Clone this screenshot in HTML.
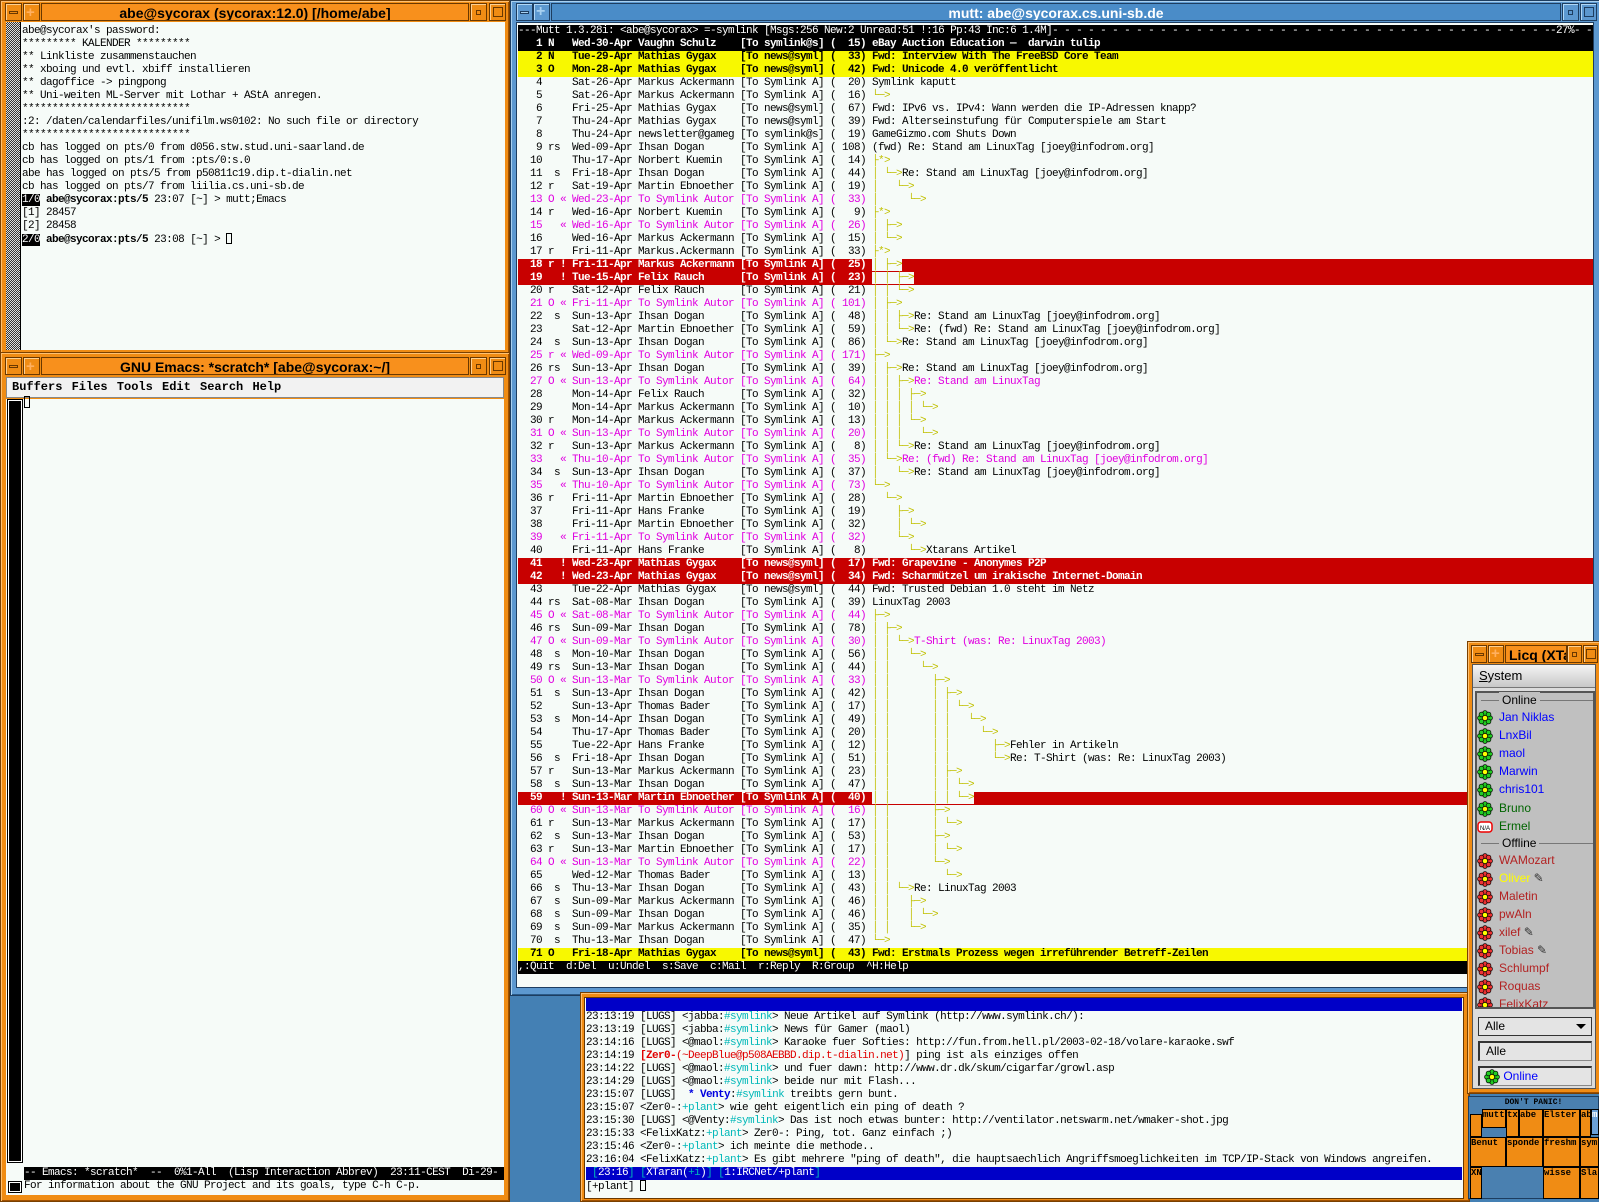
<!DOCTYPE html>
<html><head><meta charset="utf-8">
<style>
*{box-sizing:border-box}
body{margin:0;width:1599px;height:1199px;background:#4480b4;position:relative;overflow:hidden;font-family:"Liberation Sans",sans-serif}
.a{position:absolute}
.mono{font:11px/13px "Liberation Mono","DejaVu Sans Mono",monospace;letter-spacing:-0.6px;white-space:pre}
.ow{position:absolute;background:#f08c14;border:1px solid #7a4000;box-shadow:inset 1px 1px 0 #ffc070,inset -1px -1px 0 #a05000}
.bw{position:absolute;background:#5c98d0;border:1px solid #1d3d60;box-shadow:inset 1px 1px 0 #a8d0f0,inset -1px -1px 0 #2a5a88}
.tt{position:absolute;top:3px;height:18px;font:bold 14px/18px "Liberation Sans",sans-serif;text-align:center;border:1px solid #6a3800;white-space:nowrap;overflow:hidden}
.btn{position:absolute;top:3px;width:17px;height:18px;border:1px solid #6a3800;box-shadow:inset 1px 1px 0 #ffd090}
.bb{border-color:#1d3d60;box-shadow:inset 1px 1px 0 #b0d8f8}
.bg{background:#f6fbf8}
#m{white-space:normal}
#m .r{position:relative;height:13px;white-space:pre}
#m i{position:absolute;font-style:normal;top:0}
.n{left:0;width:24px;text-align:right}.f{left:30px}.d{left:54px}.an{left:120px}.t{left:222px}.l{left:312px}.s{left:354px}
.y{color:#c0c000;font-weight:normal}
.k{background:#000;color:#fff;font-weight:bold}
.ye{background:#f8f800;color:#000;font-weight:bold}
.rd{background:#c80000;color:#fff;font-weight:bold}
.mg{color:#e000e0}
.w{background:#f6fbf8}
.cy{color:#00b8b8}
.lq{position:absolute;left:1477px;height:18px;font:12px/18px "Liberation Sans",sans-serif;white-space:nowrap}
.lq svg{vertical-align:middle;margin-right:6px}
.pc{position:absolute;background:#f08c14;border:1px solid #000;font:bold 9px/10px "Liberation Mono",monospace;overflow:hidden;white-space:nowrap;color:#000}
</style></head><body>
<svg width="0" height="0" style="position:absolute">
<defs>
<g id="fl"><g stroke="#000" stroke-width="0.7">
<circle cx="8" cy="3" r="2.4"/><circle cx="8" cy="13" r="2.4"/><circle cx="3" cy="8" r="2.4"/><circle cx="13" cy="8" r="2.4"/>
<circle cx="4.5" cy="4.5" r="2.4"/><circle cx="11.5" cy="11.5" r="2.4"/><circle cx="4.5" cy="11.5" r="2.4"/><circle cx="11.5" cy="4.5" r="2.4"/></g>
<circle cx="8" cy="8" r="2.6" fill="#ff0" stroke="#000" stroke-width="0.6"/></g>
</defs></svg>

<!-- top-left terminal -->
<div class="ow" style="left:0;top:0;width:510px;height:354px"></div>
<div class="btn" style="left:5px;background:#f08c14"><div class="a" style="left:3px;top:7px;width:9px;height:3px;border:1px solid #6a3800"></div></div>
<div class="btn" style="left:23px;background:#f08c14"><div class="a" style="left:2px;top:2px;font:bold 15px/13px sans-serif;color:#ffb060">+</div></div>
<div class="tt" style="left:41px;width:428px;background:#f8901c">abe@sycorax (sycorax:12.0) [/home/abe]</div>
<div class="btn" style="left:470px;background:#f08c14"><div class="a" style="left:5px;top:6px;width:5px;height:5px;border:1px solid #6a3800"></div></div>
<div class="btn" style="left:489px;background:#f08c14"><div class="a" style="left:3px;top:3px;width:10px;height:10px;border:1px solid #6a3800"></div></div>
<div class="a" style="left:6px;top:22px;width:14px;height:328px;background:repeating-conic-gradient(#333 0 25%,#ddd 0 50%) 0 0/2px 2px"></div>
<div class="a bg" style="left:20px;top:22px;width:485px;height:328px;border-left:1px solid #000"></div>
<div class="a mono" style="left:22px;top:25px;color:#000">abe@sycorax's password:
********* KALENDER *********
** Linkliste zusammenstauchen
** xboing und evtl. xbiff installieren
** dagoffice -> pingpong
** Uni-weiten ML-Server mit Lothar + AStA anregen.
****************************
:2: /daten/calendarfiles/unifilm.ws0102: No such file or directory
****************************
cb has logged on pts/0 from d056.stw.stud.uni-saarland.de
cb has logged on pts/1 from :pts/0:s.0
abe has logged on pts/5 from p50811c19.dip.t-dialin.net
cb has logged on pts/7 from liilia.cs.uni-sb.de
<span style="background:#000;color:#fff">1/0</span> <b>abe@sycorax:pts/5</b> 23:07 [~] > mutt;Emacs
[1] 28457
[2] 28458
<span style="background:#000;color:#fff">2/0</span> <b>abe@sycorax:pts/5</b> 23:08 [~] > <span style="display:inline-block;width:6px;height:11px;border:1px solid #000;vertical-align:-2px"></span></div>

<!-- emacs -->
<div class="ow" style="left:0;top:352px;width:510px;height:850px"></div>
<div class="btn" style="left:5px;top:357px;background:#f08c14"><div class="a" style="left:3px;top:7px;width:9px;height:3px;border:1px solid #6a3800"></div></div>
<div class="btn" style="left:23px;top:357px;background:#f08c14"><div class="a" style="left:2px;top:2px;font:bold 15px/13px sans-serif;color:#ffb060">+</div></div>
<div class="tt" style="left:41px;top:357px;width:428px;background:#f8901c">GNU Emacs: *scratch* [abe@sycorax:~/]</div>
<div class="btn" style="left:470px;top:357px;background:#f08c14"><div class="a" style="left:5px;top:6px;width:5px;height:5px;border:1px solid #6a3800"></div></div>
<div class="btn" style="left:489px;top:357px;background:#f08c14"><div class="a" style="left:3px;top:3px;width:10px;height:10px;border:1px solid #6a3800"></div></div>
<div class="a" style="left:6px;top:377px;width:498px;height:21px;background:#f2f2f2;border:1px solid #888;font:bold 12px/19px 'Liberation Mono',monospace;padding-left:5px;word-spacing:2px">Buffers Files Tools Edit Search Help</div>
<div class="a bg" style="left:6px;top:399px;width:498px;height:796px"></div>
<div class="a" style="left:8px;top:400px;width:14px;height:762px;background:#000;border:1px solid #fff;outline:1px solid #000"></div>
<div class="a" style="left:24px;top:396px;width:6px;height:12px;border:1px solid #000"></div>
<div class="a mono" style="left:24px;top:1167px;width:480px;height:13px;background:#000;color:#fff">-- Emacs: *scratch*  --  0%1-All  (Lisp Interaction Abbrev)  23:11-CEST  Di-29-</div>
<div class="a" style="left:9px;top:1182px;width:12px;height:10px;background:#000;border:1px solid #fff;outline:1px solid #000"></div>
<div class="a mono" style="left:24px;top:1180px">For information about the GNU Project and its goals, type C-h C-p.</div>

<!-- mutt -->
<div class="bw" style="left:510px;top:0;width:1092px;height:996px"></div>
<div class="btn bb" style="left:516px;background:#5c98d0"><div class="a" style="left:3px;top:7px;width:9px;height:3px;border:1px solid #1d3d60;background:#a8d0f0"></div></div>
<div class="btn bb" style="left:533px;background:#5c98d0"><div class="a" style="left:2px;top:0px;font:bold 16px/15px sans-serif;color:#a8d0f0">+</div></div>
<div class="tt" style="left:551px;width:1010px;background:#4a8cc8;color:#fff;border-color:#1d3d60">mutt: abe@sycorax.cs.uni-sb.de</div>
<div class="btn bb" style="left:1562px;background:#5c98d0"><div class="a" style="left:5px;top:6px;width:5px;height:5px;border:1px solid #1d3d60"></div></div>
<div class="btn bb" style="left:1580px;background:#5c98d0"><div class="a" style="left:3px;top:3px;width:10px;height:10px;border:1px solid #1d3d60"></div></div>
<div class="a bg" style="left:516px;top:22px;width:1078px;height:966px;border:1px solid #1d3d60"></div>
<div id="m" class="a mono" style="left:518px;top:25px;width:1075px;color:#000;overflow:hidden">
<div class="r k" style="font-weight:normal;overflow:hidden">---Mutt 1.3.28i: &lt;abe@sycorax&gt; =-symlink [Msgs:256 New:2 Unread:51 !:16 Pp:43 Inc:6 1.4M]- - - - - - - - - - - - - - - - - - - - - - - - - - - - - - - - - - - - - - - - - - - - - - - - - - - - - - - - - - - - - - - - - - - - - - - - - - - - - - - - -<i style="left:1032px;background:#000">-27%- -</i></div>
<div class="r k"><i class="n">1</i><i class="f">N</i><i class="d">Wed-30-Apr</i><i class="an">Vaughn Schulz</i><i class="t">[To symlink@s]</i><i class="l">(  15)</i><i class="s">eBay Auction Education —  darwin tulip</i></div>
<div class="r ye"><i class="n">2</i><i class="f">N</i><i class="d">Tue-29-Apr</i><i class="an">Mathias Gygax</i><i class="t">[To news@syml]</i><i class="l">(  33)</i><i class="s">Fwd: Interview With The FreeBSD Core Team</i></div>
<div class="r ye"><i class="n">3</i><i class="f">O</i><i class="d">Mon-28-Apr</i><i class="an">Mathias Gygax</i><i class="t">[To news@syml]</i><i class="l">(  42)</i><i class="s">Fwd: Unicode 4.0 veröffentlicht</i></div>
<div class="r"><i class="n">4</i><i class="d">Sat-26-Apr</i><i class="an">Markus Ackermann</i><i class="t">[To Symlink A]</i><i class="l">(  20)</i><i class="s">Symlink kaputt</i></div>
<div class="r"><i class="n">5</i><i class="d">Sat-26-Apr</i><i class="an">Markus Ackermann</i><i class="t">[To Symlink A]</i><i class="l">(  16)</i><i class="s"><span class="y">└─></span></i></div>
<div class="r"><i class="n">6</i><i class="d">Fri-25-Apr</i><i class="an">Mathias Gygax</i><i class="t">[To news@syml]</i><i class="l">(  67)</i><i class="s">Fwd: IPv6 vs. IPv4: Wann werden die IP-Adressen knapp?</i></div>
<div class="r"><i class="n">7</i><i class="d">Thu-24-Apr</i><i class="an">Mathias Gygax</i><i class="t">[To news@syml]</i><i class="l">(  39)</i><i class="s">Fwd: Alterseinstufung für Computerspiele am Start</i></div>
<div class="r"><i class="n">8</i><i class="d">Thu-24-Apr</i><i class="an">newsletter@gameg</i><i class="t">[To symlink@s]</i><i class="l">(  19)</i><i class="s">GameGizmo.com Shuts Down</i></div>
<div class="r"><i class="n">9</i><i class="f">rs</i><i class="d">Wed-09-Apr</i><i class="an">Ihsan Dogan</i><i class="t">[To Symlink A]</i><i class="l">( 108)</i><i class="s">(fwd) Re: Stand am LinuxTag [joey@infodrom.org]</i></div>
<div class="r"><i class="n">10</i><i class="d">Thu-17-Apr</i><i class="an">Norbert Kuemin</i><i class="t">[To Symlink A]</i><i class="l">(  14)</i><i class="s"><span class="y">├*></span></i></div>
<div class="r"><i class="n">11</i><i class="f"> s</i><i class="d">Fri-18-Apr</i><i class="an">Ihsan Dogan</i><i class="t">[To Symlink A]</i><i class="l">(  44)</i><i class="s"><span class="y">│ └─></span>Re: Stand am LinuxTag [joey@infodrom.org]</i></div>
<div class="r"><i class="n">12</i><i class="f">r</i><i class="d">Sat-19-Apr</i><i class="an">Martin Ebnoether</i><i class="t">[To Symlink A]</i><i class="l">(  19)</i><i class="s"><span class="y">│   └─></span></i></div>
<div class="r mg"><i class="n">13</i><i class="f">O «</i><i class="d">Wed-23-Apr</i><i class="an">To Symlink Autor</i><i class="t">[To Symlink A]</i><i class="l">(  33)</i><i class="s"><span class="y">│     └─></span></i></div>
<div class="r"><i class="n">14</i><i class="f">r</i><i class="d">Wed-16-Apr</i><i class="an">Norbert Kuemin</i><i class="t">[To Symlink A]</i><i class="l">(   9)</i><i class="s"><span class="y">├*></span></i></div>
<div class="r mg"><i class="n">15</i><i class="f">  «</i><i class="d">Wed-16-Apr</i><i class="an">To Symlink Autor</i><i class="t">[To Symlink A]</i><i class="l">(  26)</i><i class="s"><span class="y">│ ├─></span></i></div>
<div class="r"><i class="n">16</i><i class="d">Wed-16-Apr</i><i class="an">Markus Ackermann</i><i class="t">[To Symlink A]</i><i class="l">(  15)</i><i class="s"><span class="y">│ └─></span></i></div>
<div class="r"><i class="n">17</i><i class="f">r</i><i class="d">Fri-11-Apr</i><i class="an">Markus.Ackermann</i><i class="t">[To Symlink A]</i><i class="l">(  33)</i><i class="s"><span class="y">├*></span></i></div>
<div class="r rd"><i class="n">18</i><i class="f">r !</i><i class="d">Fri-11-Apr</i><i class="an">Markus Ackermann</i><i class="t">[To Symlink A]</i><i class="l">(  25)</i><i class="s"><span class="y w">│ ├─></span></i></div>
<div class="r rd"><i class="n">19</i><i class="f">  !</i><i class="d">Tue-15-Apr</i><i class="an">Felix Rauch</i><i class="t">[To Symlink A]</i><i class="l">(  23)</i><i class="s"><span class="y w">│ │ ├─></span></i></div>
<div class="r"><i class="n">20</i><i class="f">r</i><i class="d">Sat-12-Apr</i><i class="an">Felix Rauch</i><i class="t">[To Symlink A]</i><i class="l">(  21)</i><i class="s"><span class="y">│ │ └─></span></i></div>
<div class="r mg"><i class="n">21</i><i class="f">O «</i><i class="d">Fri-11-Apr</i><i class="an">To Symlink Autor</i><i class="t">[To Symlink A]</i><i class="l">( 101)</i><i class="s"><span class="y">│ ├─></span></i></div>
<div class="r"><i class="n">22</i><i class="f"> s</i><i class="d">Sun-13-Apr</i><i class="an">Ihsan Dogan</i><i class="t">[To Symlink A]</i><i class="l">(  48)</i><i class="s"><span class="y">│ │ ├─></span>Re: Stand am LinuxTag [joey@infodrom.org]</i></div>
<div class="r"><i class="n">23</i><i class="d">Sat-12-Apr</i><i class="an">Martin Ebnoether</i><i class="t">[To Symlink A]</i><i class="l">(  59)</i><i class="s"><span class="y">│ │ └─></span>Re: (fwd) Re: Stand am LinuxTag [joey@infodrom.org]</i></div>
<div class="r"><i class="n">24</i><i class="f"> s</i><i class="d">Sun-13-Apr</i><i class="an">Ihsan Dogan</i><i class="t">[To Symlink A]</i><i class="l">(  86)</i><i class="s"><span class="y">│ └─></span>Re: Stand am LinuxTag [joey@infodrom.org]</i></div>
<div class="r mg"><i class="n">25</i><i class="f">r «</i><i class="d">Wed-09-Apr</i><i class="an">To Symlink Autor</i><i class="t">[To Symlink A]</i><i class="l">( 171)</i><i class="s"><span class="y">├─></span></i></div>
<div class="r"><i class="n">26</i><i class="f">rs</i><i class="d">Sun-13-Apr</i><i class="an">Ihsan Dogan</i><i class="t">[To Symlink A]</i><i class="l">(  39)</i><i class="s"><span class="y">│ ├─></span>Re: Stand am LinuxTag [joey@infodrom.org]</i></div>
<div class="r mg"><i class="n">27</i><i class="f">O «</i><i class="d">Sun-13-Apr</i><i class="an">To Symlink Autor</i><i class="t">[To Symlink A]</i><i class="l">(  64)</i><i class="s"><span class="y">│ │ ├─></span>Re: Stand am LinuxTag</i></div>
<div class="r"><i class="n">28</i><i class="d">Mon-14-Apr</i><i class="an">Felix Rauch</i><i class="t">[To Symlink A]</i><i class="l">(  32)</i><i class="s"><span class="y">│ │ │ ├─></span></i></div>
<div class="r"><i class="n">29</i><i class="d">Mon-14-Apr</i><i class="an">Markus Ackermann</i><i class="t">[To Symlink A]</i><i class="l">(  10)</i><i class="s"><span class="y">│ │ │ │ └─></span></i></div>
<div class="r"><i class="n">30</i><i class="f">r</i><i class="d">Mon-14-Apr</i><i class="an">Markus Ackermann</i><i class="t">[To Symlink A]</i><i class="l">(  13)</i><i class="s"><span class="y">│ │ │ └─></span></i></div>
<div class="r mg"><i class="n">31</i><i class="f">O «</i><i class="d">Sun-13-Apr</i><i class="an">To Symlink Autor</i><i class="t">[To Symlink A]</i><i class="l">(  20)</i><i class="s"><span class="y">│ │ │   └─></span></i></div>
<div class="r"><i class="n">32</i><i class="f">r</i><i class="d">Sun-13-Apr</i><i class="an">Markus Ackermann</i><i class="t">[To Symlink A]</i><i class="l">(   8)</i><i class="s"><span class="y">│ │ └─></span>Re: Stand am LinuxTag [joey@infodrom.org]</i></div>
<div class="r mg"><i class="n">33</i><i class="f">  «</i><i class="d">Thu-10-Apr</i><i class="an">To Symlink Autor</i><i class="t">[To Symlink A]</i><i class="l">(  35)</i><i class="s"><span class="y">│ └─></span>Re: (fwd) Re: Stand am LinuxTag [joey@infodrom.org]</i></div>
<div class="r"><i class="n">34</i><i class="f"> s</i><i class="d">Sun-13-Apr</i><i class="an">Ihsan Dogan</i><i class="t">[To Symlink A]</i><i class="l">(  37)</i><i class="s"><span class="y">│   └─></span>Re: Stand am LinuxTag [joey@infodrom.org]</i></div>
<div class="r mg"><i class="n">35</i><i class="f">  «</i><i class="d">Thu-10-Apr</i><i class="an">To Symlink Autor</i><i class="t">[To Symlink A]</i><i class="l">(  73)</i><i class="s"><span class="y">└─></span></i></div>
<div class="r"><i class="n">36</i><i class="f">r</i><i class="d">Fri-11-Apr</i><i class="an">Martin Ebnoether</i><i class="t">[To Symlink A]</i><i class="l">(  28)</i><i class="s"><span class="y">  └─></span></i></div>
<div class="r"><i class="n">37</i><i class="d">Fri-11-Apr</i><i class="an">Hans Franke</i><i class="t">[To Symlink A]</i><i class="l">(  19)</i><i class="s"><span class="y">    ├─></span></i></div>
<div class="r"><i class="n">38</i><i class="d">Fri-11-Apr</i><i class="an">Martin Ebnoether</i><i class="t">[To Symlink A]</i><i class="l">(  32)</i><i class="s"><span class="y">    │ └─></span></i></div>
<div class="r mg"><i class="n">39</i><i class="f">  «</i><i class="d">Fri-11-Apr</i><i class="an">To Symlink Autor</i><i class="t">[To Symlink A]</i><i class="l">(  32)</i><i class="s"><span class="y">    └─></span></i></div>
<div class="r"><i class="n">40</i><i class="d">Fri-11-Apr</i><i class="an">Hans Franke</i><i class="t">[To Symlink A]</i><i class="l">(   8)</i><i class="s"><span class="y">      └─></span>Xtarans Artikel</i></div>
<div class="r rd"><i class="n">41</i><i class="f">  !</i><i class="d">Wed-23-Apr</i><i class="an">Mathias Gygax</i><i class="t">[To news@syml]</i><i class="l">(  17)</i><i class="s">Fwd: Grapevine - Anonymes P2P</i></div>
<div class="r rd"><i class="n">42</i><i class="f">  !</i><i class="d">Wed-23-Apr</i><i class="an">Mathias Gygax</i><i class="t">[To news@syml]</i><i class="l">(  34)</i><i class="s">Fwd: Scharmützel um irakische Internet-Domain</i></div>
<div class="r"><i class="n">43</i><i class="d">Tue-22-Apr</i><i class="an">Mathias Gygax</i><i class="t">[To news@syml]</i><i class="l">(  44)</i><i class="s">Fwd: Trusted Debian 1.0 steht im Netz</i></div>
<div class="r"><i class="n">44</i><i class="f">rs</i><i class="d">Sat-08-Mar</i><i class="an">Ihsan Dogan</i><i class="t">[To Symlink A]</i><i class="l">(  39)</i><i class="s">LinuxTag 2003</i></div>
<div class="r mg"><i class="n">45</i><i class="f">O «</i><i class="d">Sat-08-Mar</i><i class="an">To Symlink Autor</i><i class="t">[To Symlink A]</i><i class="l">(  44)</i><i class="s"><span class="y">├─></span></i></div>
<div class="r"><i class="n">46</i><i class="f">rs</i><i class="d">Sun-09-Mar</i><i class="an">Ihsan Dogan</i><i class="t">[To Symlink A]</i><i class="l">(  78)</i><i class="s"><span class="y">│ ├─></span></i></div>
<div class="r mg"><i class="n">47</i><i class="f">O «</i><i class="d">Sun-09-Mar</i><i class="an">To Symlink Autor</i><i class="t">[To Symlink A]</i><i class="l">(  30)</i><i class="s"><span class="y">│ │ └─></span>T-Shirt (was: Re: LinuxTag 2003)</i></div>
<div class="r"><i class="n">48</i><i class="f"> s</i><i class="d">Mon-10-Mar</i><i class="an">Ihsan Dogan</i><i class="t">[To Symlink A]</i><i class="l">(  56)</i><i class="s"><span class="y">│ │   └─></span></i></div>
<div class="r"><i class="n">49</i><i class="f">rs</i><i class="d">Sun-13-Mar</i><i class="an">Ihsan Dogan</i><i class="t">[To Symlink A]</i><i class="l">(  44)</i><i class="s"><span class="y">│ │     └─></span></i></div>
<div class="r mg"><i class="n">50</i><i class="f">O «</i><i class="d">Sun-13-Mar</i><i class="an">To Symlink Autor</i><i class="t">[To Symlink A]</i><i class="l">(  33)</i><i class="s"><span class="y">│ │       ├─></span></i></div>
<div class="r"><i class="n">51</i><i class="f"> s</i><i class="d">Sun-13-Apr</i><i class="an">Ihsan Dogan</i><i class="t">[To Symlink A]</i><i class="l">(  42)</i><i class="s"><span class="y">│ │       │ ├─></span></i></div>
<div class="r"><i class="n">52</i><i class="d">Sun-13-Apr</i><i class="an">Thomas Bader</i><i class="t">[To Symlink A]</i><i class="l">(  17)</i><i class="s"><span class="y">│ │       │ │ └─></span></i></div>
<div class="r"><i class="n">53</i><i class="f"> s</i><i class="d">Mon-14-Apr</i><i class="an">Ihsan Dogan</i><i class="t">[To Symlink A]</i><i class="l">(  49)</i><i class="s"><span class="y">│ │       │ │   └─></span></i></div>
<div class="r"><i class="n">54</i><i class="d">Thu-17-Apr</i><i class="an">Thomas Bader</i><i class="t">[To Symlink A]</i><i class="l">(  20)</i><i class="s"><span class="y">│ │       │ │     └─></span></i></div>
<div class="r"><i class="n">55</i><i class="d">Tue-22-Apr</i><i class="an">Hans Franke</i><i class="t">[To Symlink A]</i><i class="l">(  12)</i><i class="s"><span class="y">│ │       │ │       ├─></span>Fehler in Artikeln</i></div>
<div class="r"><i class="n">56</i><i class="f"> s</i><i class="d">Fri-18-Apr</i><i class="an">Ihsan Dogan</i><i class="t">[To Symlink A]</i><i class="l">(  51)</i><i class="s"><span class="y">│ │       │ │       └─></span>Re: T-Shirt (was: Re: LinuxTag 2003)</i></div>
<div class="r"><i class="n">57</i><i class="f">r</i><i class="d">Sun-13-Mar</i><i class="an">Markus Ackermann</i><i class="t">[To Symlink A]</i><i class="l">(  23)</i><i class="s"><span class="y">│ │       │ ├─></span></i></div>
<div class="r"><i class="n">58</i><i class="f"> s</i><i class="d">Sun-13-Mar</i><i class="an">Ihsan Dogan</i><i class="t">[To Symlink A]</i><i class="l">(  47)</i><i class="s"><span class="y">│ │       │ │ └─></span></i></div>
<div class="r rd"><i class="n">59</i><i class="f">  !</i><i class="d">Sun-13-Mar</i><i class="an">Martin Ebnoether</i><i class="t">[To Symlink A]</i><i class="l">(  40)</i><i class="s"><span class="y w">│ │       │ │ └─></span></i></div>
<div class="r mg"><i class="n">60</i><i class="f">O «</i><i class="d">Sun-13-Mar</i><i class="an">To Symlink Autor</i><i class="t">[To Symlink A]</i><i class="l">(  16)</i><i class="s"><span class="y">│ │       ├─></span></i></div>
<div class="r"><i class="n">61</i><i class="f">r</i><i class="d">Sun-13-Mar</i><i class="an">Markus Ackermann</i><i class="t">[To Symlink A]</i><i class="l">(  17)</i><i class="s"><span class="y">│ │       │ └─></span></i></div>
<div class="r"><i class="n">62</i><i class="f"> s</i><i class="d">Sun-13-Mar</i><i class="an">Ihsan Dogan</i><i class="t">[To Symlink A]</i><i class="l">(  53)</i><i class="s"><span class="y">│ │       ├─></span></i></div>
<div class="r"><i class="n">63</i><i class="f">r</i><i class="d">Sun-13-Mar</i><i class="an">Martin Ebnoether</i><i class="t">[To Symlink A]</i><i class="l">(  17)</i><i class="s"><span class="y">│ │       │ └─></span></i></div>
<div class="r mg"><i class="n">64</i><i class="f">O «</i><i class="d">Sun-13-Mar</i><i class="an">To Symlink Autor</i><i class="t">[To Symlink A]</i><i class="l">(  22)</i><i class="s"><span class="y">│ │       └─></span></i></div>
<div class="r"><i class="n">65</i><i class="d">Wed-12-Mar</i><i class="an">Thomas Bader</i><i class="t">[To Symlink A]</i><i class="l">(  13)</i><i class="s"><span class="y">│ │         └─></span></i></div>
<div class="r"><i class="n">66</i><i class="f"> s</i><i class="d">Thu-13-Mar</i><i class="an">Ihsan Dogan</i><i class="t">[To Symlink A]</i><i class="l">(  43)</i><i class="s"><span class="y">│ │ └─></span>Re: LinuxTag 2003</i></div>
<div class="r"><i class="n">67</i><i class="f"> s</i><i class="d">Sun-09-Mar</i><i class="an">Markus Ackermann</i><i class="t">[To Symlink A]</i><i class="l">(  46)</i><i class="s"><span class="y">│ │   ├─></span></i></div>
<div class="r"><i class="n">68</i><i class="f"> s</i><i class="d">Sun-09-Mar</i><i class="an">Ihsan Dogan</i><i class="t">[To Symlink A]</i><i class="l">(  46)</i><i class="s"><span class="y">│ │   │ └─></span></i></div>
<div class="r"><i class="n">69</i><i class="f"> s</i><i class="d">Sun-09-Mar</i><i class="an">Markus Ackermann</i><i class="t">[To Symlink A]</i><i class="l">(  35)</i><i class="s"><span class="y">│ │   └─></span></i></div>
<div class="r"><i class="n">70</i><i class="f"> s</i><i class="d">Thu-13-Mar</i><i class="an">Ihsan Dogan</i><i class="t">[To Symlink A]</i><i class="l">(  47)</i><i class="s"><span class="y">└─></span></i></div>
<div class="r ye"><i class="n">71</i><i class="f">O</i><i class="d">Fri-18-Apr</i><i class="an">Mathias Gygax</i><i class="t">[To news@syml]</i><i class="l">(  43)</i><i class="s">Fwd: Erstmals Prozess wegen irreführender Betreff-Zeilen</i></div>
<div class="r k" style="font-weight:normal">,:Quit  d:Del  u:Undel  s:Save  c:Mail  r:Reply  R:Group  ^H:Help</div>
</div>

<!-- IRC -->
<div class="ow" style="left:580px;top:992px;width:890px;height:210px"></div>
<div class="a bg" style="left:584px;top:997px;width:880px;height:202px;border:1px solid #6a3800"></div>
<div class="a" style="left:586px;top:998px;width:876px;height:13px;background:#0000c8"></div>
<div class="a mono" style="left:586px;top:1011px;color:#000">23:13:19 [LUGS] &lt;jabba:<span class="cy">#symlink</span>&gt; Neue Artikel auf Symlink (http://www.symlink.ch/):
23:13:19 [LUGS] &lt;jabba:<span class="cy">#symlink</span>&gt; News für Gamer (maol)
23:14:16 [LUGS] &lt;@maol:<span class="cy">#symlink</span>&gt; Karaoke fuer Softies: http://fun.from.hell.pl/2003-02-18/volare-karaoke.swf
23:14:19 <span style="color:#e00000"><b>[Zer0-</b>(~DeepBlue@p508AEBBD.dip.t-dialin.net)</span>] ping ist als einziges offen
23:14:22 [LUGS] &lt;@maol:<span class="cy">#symlink</span>&gt; und fuer dawn: http://www.dr.dk/skum/cigarfar/growl.asp
23:14:29 [LUGS] &lt;@maol:<span class="cy">#symlink</span>&gt; beide nur mit Flash...
23:15:07 [LUGS]  <b style="color:#0000e0">* Venty</b>:<span class="cy">#symlink</span> treibts gern bunt.
23:15:07 &lt;Zer0-:<span class="cy">+plant</span>&gt; wie geht eigentlich ein ping of death ?
23:15:30 [LUGS] &lt;@Venty:<span class="cy">#symlink</span>&gt; Das ist noch etwas bunter: http://ventilator.netswarm.net/wmaker-shot.jpg
23:15:33 &lt;FelixKatz:<span class="cy">+plant</span>&gt; Zer0-: Ping, tot. Ganz einfach ;)
23:15:46 &lt;Zer0-:<span class="cy">+plant</span>&gt; ich meinte die methode..
23:16:04 &lt;FelixKatz:<span class="cy">+plant</span>&gt; Es gibt mehrere "ping of death", die hauptsaechlich Angriffsmoeglichkeiten im TCP/IP-Stack von Windows angreifen.</div>
<div class="a mono" style="left:586px;top:1167px;width:876px;height:13px;background:#0000c8;color:#fff"> <span class="cy">[</span>23:16<span class="cy">]</span> <span class="cy">[</span>XTaran(<span class="cy">+i</span>)<span class="cy">]</span> <span class="cy">[</span>1:IRCNet/+plant<span class="cy">]</span></div>
<div class="a mono" style="left:586px;top:1180px">[+plant] <span style="display:inline-block;width:6px;height:11px;border:1px solid #000;vertical-align:-2px"></span></div>

<!-- Licq -->
<div class="ow" style="left:1467px;top:641px;width:135px;height:453px"></div>
<div class="btn" style="left:1471px;top:645px;width:16px;background:#f08c14"><div class="a" style="left:3px;top:7px;width:9px;height:3px;border:1px solid #6a3800"></div></div>
<div class="btn" style="left:1488px;top:645px;width:16px;background:#f08c14"><div class="a" style="left:2px;top:1px;font:bold 15px/13px sans-serif;color:#ffb060">+</div></div>
<div class="tt" style="left:1505px;top:645px;width:62px;background:#f8901c;text-align:left;padding-left:3px">Licq (XTa</div>
<div class="btn" style="left:1567px;top:645px;width:15px;background:#f08c14"><div class="a" style="left:4px;top:6px;width:5px;height:5px;border:1px solid #6a3800"></div></div>
<div class="btn" style="left:1583px;top:645px;width:15px;background:#f08c14"><div class="a" style="left:2px;top:3px;width:10px;height:10px;border:1px solid #6a3800"></div></div>
<div class="a" style="left:1472px;top:664px;width:124px;height:425px;background:#dcdcdc;border:1px solid #555"></div>
<div class="a" style="left:1473px;top:665px;width:122px;height:23px;background:linear-gradient(#f4f4f4,#c8c8c8);border-bottom:1px solid #777;font:13px/22px 'Liberation Sans',sans-serif;padding-left:6px"><u>S</u>ystem</div>
<div class="a" style="left:1475px;top:691px;width:120px;height:318px;background:#c0c0c0;border:2px solid #555;overflow:hidden"></div>
<div class="a" style="left:1481px;top:700px;width:112px;height:1px;background:#777"></div>
<div class="a" style="left:1499px;top:692px;background:#c0c0c0;padding:0 3px;font:12px/16px 'Liberation Sans',sans-serif">Online</div>
<div class="lq" style="top:708px;color:#0000ff"><svg width="16" height="16"><use href="#fl" fill="#2c2"/></svg>Jan Niklas</div>
<div class="lq" style="top:726px;color:#0000ff"><svg width="16" height="16"><use href="#fl" fill="#2c2"/></svg>LnxBil</div>
<div class="lq" style="top:744px;color:#0000ff"><svg width="16" height="16"><use href="#fl" fill="#2c2"/></svg>maol</div>
<div class="lq" style="top:762px;color:#0000ff"><svg width="16" height="16"><use href="#fl" fill="#2c2"/></svg>Marwin</div>
<div class="lq" style="top:780px;color:#0000ff"><svg width="16" height="16"><use href="#fl" fill="#2c2"/></svg>chris101</div>
<div class="lq" style="top:799px;color:#006400"><svg width="16" height="16"><use href="#fl" fill="#2c2"/></svg>Bruno</div>
<div class="lq" style="top:817px;color:#006400"><svg width="16" height="16"><rect x="1" y="3" width="14" height="10" rx="3" fill="#fff" stroke="#e00" stroke-width="1.5"/><text x="8" y="11" font-size="6" text-anchor="middle" font-family="Liberation Sans" fill="#000">N/A</text></svg>Ermel</div>
<div class="a" style="left:1481px;top:843px;width:112px;height:1px;background:#777"></div>
<div class="a" style="left:1499px;top:835px;background:#c0c0c0;padding:0 3px;font:12px/16px 'Liberation Sans',sans-serif">Offline</div>
<div class="lq" style="top:851px;color:#b22222"><svg width="16" height="16"><use href="#fl" fill="#e33"/></svg>WAMozart</div>
<div class="lq" style="top:869px;color:#ffff00"><svg width="16" height="16"><use href="#fl" fill="#e33"/></svg>Oliver <span style="color:#333">✎</span></div>
<div class="lq" style="top:887px;color:#b22222"><svg width="16" height="16"><use href="#fl" fill="#e33"/></svg>Maletin</div>
<div class="lq" style="top:905px;color:#b22222"><svg width="16" height="16"><use href="#fl" fill="#e33"/></svg>pwAln</div>
<div class="lq" style="top:923px;color:#b22222"><svg width="16" height="16"><use href="#fl" fill="#e33"/></svg>xilef <span style="color:#333">✎</span></div>
<div class="lq" style="top:941px;color:#b22222"><svg width="16" height="16"><use href="#fl" fill="#e33"/></svg>Tobias <span style="color:#333">✎</span></div>
<div class="lq" style="top:959px;color:#b22222"><svg width="16" height="16"><use href="#fl" fill="#e33"/></svg>Schlumpf</div>
<div class="lq" style="top:977px;color:#b22222"><svg width="16" height="16"><use href="#fl" fill="#e33"/></svg>Roquas</div>
<div class="lq" style="top:995px;color:#b22222;height:12px;overflow:hidden"><svg width="16" height="16"><use href="#fl" fill="#e33"/></svg>FelixKatz</div>
<div class="a" style="left:1478px;top:1017px;width:114px;height:19px;background:#e4e4e4;border:1px solid #333;font:12px/17px 'Liberation Sans',sans-serif;padding-left:6px">Alle<span class="a" style="right:5px;top:6px;width:0;height:0;border-left:5px solid transparent;border-right:5px solid transparent;border-top:5px solid #000"></span></div>
<div class="a" style="left:1478px;top:1041px;width:114px;height:20px;background:#e4e4e4;border:1px solid #888;border-left:2px solid #333;border-top:2px solid #333;font:12px/16px 'Liberation Sans',sans-serif;padding-left:6px">Alle</div>
<div class="a" style="left:1478px;top:1066px;width:114px;height:20px;background:#e4e4e4;border:1px solid #888;border-left:2px solid #333;border-top:2px solid #333;font:12px/16px 'Liberation Sans',sans-serif;padding-left:4px;color:#0000ff"><svg width="16" height="16" style="vertical-align:middle"><use href="#fl" fill="#2c2"/></svg> Online</div>

<!-- pager -->
<div class="a" style="left:1468px;top:1096px;width:131px;height:103px;background:#4a80b0;border:1px solid #1d3d60"></div>
<div class="a" style="left:1468px;top:1098px;width:131px;text-align:center;font:bold 8px/10px 'Liberation Mono',monospace;color:#000">DON'T PANIC!</div>
<div class="pc" style="left:1470px;top:1114px;width:12px;height:23px"></div>
<div class="pc" style="left:1482px;top:1109px;width:24px;height:19px">mutt</div>
<div class="pc" style="left:1506px;top:1109px;width:13px;height:28px">tx</div>
<div class="pc" style="left:1519px;top:1109px;width:24px;height:28px">abe</div>
<div class="pc" style="left:1543px;top:1109px;width:37px;height:28px">Elster</div>
<div class="pc" style="left:1580px;top:1109px;width:11px;height:28px">ab</div>
<div class="pc" style="left:1591px;top:1109px;width:8px;height:26px;background:#6aa0d8;color:#fff">mu</div>
<div class="pc" style="left:1470px;top:1137px;width:36px;height:30px">Benut</div>
<div class="pc" style="left:1506px;top:1137px;width:37px;height:30px">sponde</div>
<div class="pc" style="left:1543px;top:1137px;width:37px;height:30px">freshm</div>
<div class="pc" style="left:1580px;top:1137px;width:19px;height:30px">symli</div>
<div class="pc" style="left:1470px;top:1167px;width:12px;height:32px">XN</div>
<div class="pc" style="left:1543px;top:1167px;width:37px;height:32px">wisse</div>
<div class="pc" style="left:1580px;top:1167px;width:19px;height:32px">Slash</div>
</body></html>
